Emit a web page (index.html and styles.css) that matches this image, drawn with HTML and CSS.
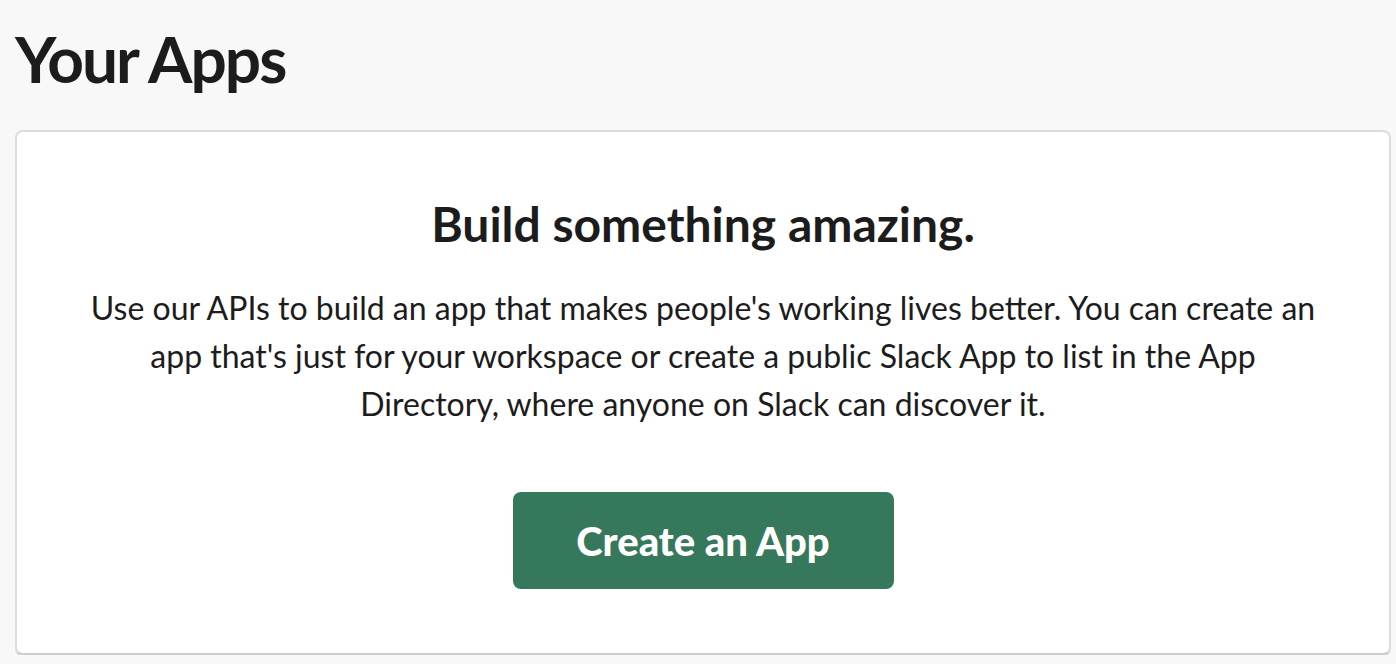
FILE: index.html
```html
<!DOCTYPE html>
<html lang="en">
<head>
    <meta charset="UTF-8">
    <meta name="viewport" content="width=device-width, initial-scale=1.0">
    <title>Your Apps</title>
    <link rel="stylesheet" href="styles.css">
</head>
<body>
    <div id="page">
        <h1 class="page_title">Your Apps</h1>
        <div class="card">
            <h2 class="card_title">Build something amazing.</h2>
            <p class="card_text">Use our APIs to build an app that makes people's working lives better. You can create an app that's just for your workspace or create a public Slack App to list in the App Directory, where anyone on Slack can discover it.</p>
            <button class="create_btn">Create an App</button>
        </div>
    </div>
</body>
</html>
```

FILE: styles.css
```css
body{
    margin: 0;
    background-color: #f8f8f8;
    font-family: Lato, "Noto Sans", sans-serif;
    color: #1d1c1d;
}
#page{
    padding: 0 5px 0 15px;
}
.page_title{
    margin: 0;
    padding-top: 20px;
    height: 110px;
    font-size: 64px;
    line-height: 78px;
    font-weight: 700;
    letter-spacing: -2px;
}
.card{
    background-color: #fff;
    border: 2px solid #dddddd;
    border-bottom-color: #cccccc;
    border-radius: 8px;
    box-shadow: 0 2px 0 #dedede;
    display: flex;
    flex-direction: column;
    align-items: center;
    padding: 62px 60px 0;
    height: 525px;
    box-sizing: border-box;
}
.card_title{
    margin: 0;
    font-size: 48px;
    line-height: 60px;
    font-weight: 700;
}
.card_text{
    margin: 30px 0 0;
    max-width: 1240px;
    font-size: 32px;
    line-height: 48px;
    text-align: center;
}
.create_btn{
    margin-top: 64px;
    width: 381px;
    height: 97px;
    background-color: #35785b;
    border: none;
    border-radius: 8px;
    color: #fff;
    font-family: Lato, "Noto Sans", sans-serif;
    font-size: 40px;
    font-weight: 900;
    cursor: pointer;
}
```
